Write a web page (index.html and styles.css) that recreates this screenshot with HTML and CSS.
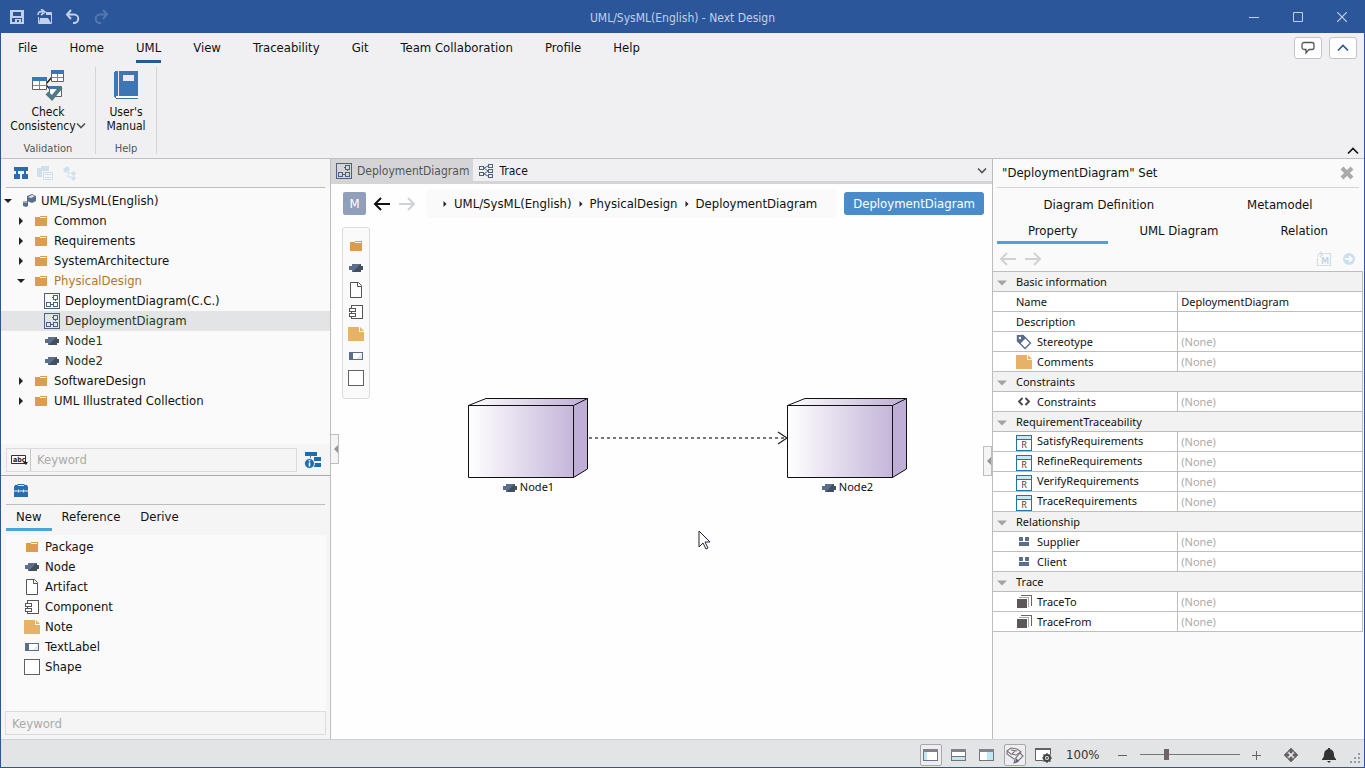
FILE: index.html
```html
<!DOCTYPE html>
<html lang="en">
<head>
    <meta charset="UTF-8">
    <meta name="viewport" content="width=device-width, initial-scale=1.0">
    <title>UML/SysML(English) - Next Design</title>
    <link rel="stylesheet" href="styles.css">
</head>
<body>

    <!-- Shared icons -->
    <svg class="sprite" aria-hidden="true">
        <symbol id="i-folder" viewBox="0 0 16 16" shape-rendering="crispEdges">
            <path d="M2 4h4l1-1h7v10H2z" fill="#dc9c50"/><path d="M7 4h6v1H6z" fill="#fff"/>
        </symbol>
        <symbol id="i-node" viewBox="0 0 16 16" shape-rendering="crispEdges">
            <path d="M1 6h3V4h9v2h2v4h-2v2H4v-2H1z" fill="#5b6f8c"/><path d="M12 4h1v2h2v4h-2v2H4z" fill="#444f5e"/>
        </symbol>
        <symbol id="i-diagram" viewBox="0 0 16 16" shape-rendering="crispEdges">
            <path d="M.5.5h15v15H.5zM9.500 2.500h4v4h-4zM2.500 9.500h4v4h-4zM9.500 9.500h4v4h-4zM8 4.500h1.500M6.500 11.500h3M11.500 6.500v1" fill="none" stroke="#4f6180"/>
        </symbol>
        <symbol id="i-artifact" viewBox="0 0 16 16">
            <path d="M2.500.5h8l3 3v12h-11z M9.500.5v4h4" fill="#fff" stroke="#555"/>
        </symbol>
        <symbol id="i-component" viewBox="0 0 16 16" shape-rendering="crispEdges">
            <path d="M3.500 1.500h11v13h-11z" fill="#fff" stroke="#555"/><path d="M1.500 4.500h6v3h-6zM1.500 9.500h6v3h-6z" fill="#fff" stroke="#555"/>
        </symbol>
        <symbol id="i-note" viewBox="0 0 16 16">
            <path d="M0 1h11v5h5v9H0z" fill="#e7b267"/><path d="M12 1l4 4h-4z" fill="#e7b267"/>
        </symbol>
        <symbol id="i-label" viewBox="0 0 16 16" shape-rendering="crispEdges">
            <path d="M1.500 4.500h13v7h-13z" fill="#fff" stroke="#5b6f8c"/><path d="M1 4h4v8H1z" fill="#5b6f8c"/><path d="M14 5v6H8z" fill="#e4e8ec"/>
        </symbol>
        <symbol id="i-shape" viewBox="0 0 16 16" shape-rendering="crispEdges">
            <path d="M.5.5h15v15H.5z" fill="#fff" stroke="#665f63"/>
        </symbol>
        <symbol id="i-right" viewBox="0 0 8 8"><path d="M2 0l4 4-4 4z" fill="#222"/></symbol>
        <symbol id="i-down" viewBox="0 0 8 8"><path d="M0 2h8L4 6z" fill="currentColor"/></symbol>
        <symbol id="i-back" viewBox="0 0 18 16"><path d="M17 8H2M8 2L2 8l6 6" fill="none" stroke="currentColor" stroke-width="2"/></symbol>
        <symbol id="i-fwd" viewBox="0 0 18 16"><path d="M1 8h15M10 2l6 6-6 6" fill="none" stroke="currentColor" stroke-width="2"/></symbol>
        <symbol id="i-chevup" viewBox="0 0 12 8"><path d="M1 6.500l5-5 5 5" fill="none" stroke="currentColor" stroke-width="1.600"/></symbol>
        <symbol id="i-chevdown" viewBox="0 0 12 8"><path d="M2 1.500l4 4 4-4" fill="none" stroke="currentColor" stroke-width="1.600"/></symbol>
        <symbol id="i-rel" viewBox="0 0 16 16" shape-rendering="crispEdges">
            <path d="M3 3h4v4H3zM9 3h4v4H9zM3 8h10v4H3z" fill="#5b6f8c"/>
        </symbol>
        <symbol id="i-trace" viewBox="0 0 16 16" shape-rendering="crispEdges">
            <path d="M1 5h10v9H1z" fill="#5c585a"/><path d="M3 3.500h9.500V13" fill="none" stroke="#aaa"/><path d="M5 1.500h10.500V12" fill="none" stroke="#666"/>
        </symbol>
        <symbol id="i-tag" viewBox="0 0 16 16">
            <path d="M1.500 2v5l7.500 7.500 5.500-5.500L7 1.500z" fill="#fff" stroke="#5b6f8c" stroke-width="1.400"/><path d="M1 1h6l3 3-6 6-3-3z" fill="#5b6f8c"/><circle cx="4" cy="4" r="1.200" fill="#fff"/>
        </symbol>
        <symbol id="i-code" viewBox="0 0 16 16"><path d="M6.500 4L3 7.500 6.500 11M9.500 4L13 7.500 9.500 11" fill="none" stroke="#444" stroke-width="1.800"/></symbol>
        <symbol id="i-box" viewBox="0 0 120 80">
            <path d="M.5 7L18 .5h101.500V71l-14 8.500H.5z" fill="url(#lilac)"/>
            <path d="M105.500 7l14-6.500V71l-14 8.500z" fill="#bfaed6"/>
            <path d="M.5 7.500L18 .5h101.500V71l-14 8.500H.5zM.5 7.500h105l14-7M105.500 7.500v72" fill="none" stroke="#111"/>
        </symbol>
        <linearGradient id="lilac"><stop offset="0" stop-color="#fff"/><stop offset="1" stop-color="#bdacd5"/></linearGradient>
    </svg>

    <header class="titlebar">
        <div class="quick">
            <button aria-label="Save"><svg width="16" height="16" viewBox="0 0 16 16" shape-rendering="crispEdges"><path d="M1 1h14v14H1zM4 3v4h8V3zM3 9v4h3v-3h6v3h1V9zM8 11v2h2v-2z" fill="currentColor" fill-rule="evenodd"/></svg></button>
            <button aria-label="Open"><svg width="16" height="16" viewBox="0 0 16 16"><path d="M1.500 8v6.500h13v-11H9" fill="none" stroke="currentColor"/><path d="M3 9h8l3 5H2zM9 4h5v2H9z" fill="currentColor"/><path d="M1 6c0-3 2-4 5-3M4 0l4 3-4 3" fill="none" stroke="currentColor" stroke-width="1.600"/></svg></button>
            <button aria-label="Undo"><svg width="16" height="16" viewBox="0 0 16 16"><path d="M6 1L2 5.500 6 10M2 5.500h7a4 4 0 0 1 0 8.500H8" fill="none" stroke="currentColor" stroke-width="2"/></svg></button>
            <button aria-label="Redo" disabled><svg width="16" height="16" viewBox="0 0 16 16"><path d="M10 1l4 4.500L10 10M14 5.500H7A4 4 0 0 0 7 14h1" fill="none" stroke="currentColor" stroke-width="2"/></svg></button>
        </div>
        <span class="title">UML/SysML(English) - Next Design</span>
        <div class="window-buttons">
            <button aria-label="Minimize"><svg width="10" height="10" viewBox="0 0 10 10"><path d="M0 5.500h10" stroke="currentColor"/></svg></button>
            <button aria-label="Maximize"><svg width="10" height="10" viewBox="0 0 10 10"><path d="M.5.5h9v9h-9z" fill="none" stroke="currentColor"/></svg></button>
            <button aria-label="Close"><svg width="10" height="10" viewBox="0 0 10 10"><path d="M0 0l10 10M10 0L0 10" stroke="currentColor" stroke-width="1.200"/></svg></button>
        </div>
    </header>

    <section class="ribbon">
        <nav class="ribbon-tabs">
            <button>File</button>
            <button>Home</button>
            <button class="active">UML</button>
            <button>View</button>
            <button>Traceability</button>
            <button>Git</button>
            <button>Team Collaboration</button>
            <button>Profile</button>
            <button>Help</button>
            <div class="ribbon-actions">
                <button aria-label="Feedback"><svg width="14" height="14" viewBox="0 0 14 14"><path d="M3 1.500h8a2 2 0 0 1 2 2v3a2 2 0 0 1-2 2H8L5 12V8.500H3a2 2 0 0 1-2-2v-3a2 2 0 0 1 2-2z" fill="none" stroke="#555" stroke-width="1.300"/></svg></button>
                <button class="blue" aria-label="Collapse header"><svg width="12" height="8"><use href="#i-chevup"/></svg></button>
            </div>
        </nav>
        <div class="ribbon-body">
            <div class="group group-check">
                <button>
                    <svg width="32" height="32" viewBox="0 0 32 32">
                        <path d="M14 15l6-7M14 16l4 4" stroke="#222" stroke-width="1.500"/>
                        <path d="M.5 8.500h14v12H.5zM19.500 1.500h12v11h-12zM17.500 17.500h12v10h-12z" fill="#fff" stroke="#665f63"/>
                        <path d="M0 8h15v4H0zM19 1h13v4H19zM17 17h10v3H17z" fill="#3c76b5"/>
                        <path d="M7.500 12v8M1 16.500h13M25.500 5v7M20 8.500h11" stroke="#8a8489"/>
                        <path d="M15 24l5 5 9-11" fill="none" stroke="#4d7c80" stroke-width="4"/>
                    </svg>
                    <span>Check<br>Consistency<svg width="10" height="8" viewBox="0 0 10 8"><path d="M1 1.500l4 4 4-4" fill="none" stroke="#555" stroke-width="1.600"/></svg></span>
                </button>
                <span class="caption">Validation</span>
            </div>
            <div class="group group-help">
                <button>
                    <svg width="32" height="32" viewBox="0 0 32 32" shape-rendering="crispEdges">
                        <path d="M5 2h23v25H7v1h21v2H6l-2-2V3z" fill="#3c76b5"/><path d="M6 27h22v2H6z" fill="#fff"/><path d="M8 2h1v25H8zM13 6h11v6H13z" fill="#eee6f4"/>
                    </svg>
                    <span>User's<br>Manual</span>
                </button>
                <span class="caption">Help</span>
            </div>
            <button class="fold" aria-label="Collapse ribbon"><svg width="12" height="8"><use href="#i-chevup"/></svg></button>
        </div>
    </section>

    <main class="workspace">
        <!-- Model navigator and toolbox -->
        <aside class="left">
            <div class="panel-tools">
                <button aria-label="Model"><svg width="14" height="14" viewBox="0 0 14 14" shape-rendering="crispEdges"><path d="M0 1h14v4H0zM2 5h2v4H2zM10 5h2v4h-2zM0 8h6v5H0zM8 8h6v5H8z" fill="#2b6cb0"/></svg></button>
                <button aria-label="Documents"><svg width="16" height="16" viewBox="0 0 16 16" shape-rendering="crispEdges"><path d="M0 3h4V1h8v5H5v6H0z" fill="#cfe0ec"/><path d="M6.500 7.500h9v7h-9zM8 9.500h6M8 12.500h6" fill="none" stroke="#cfe0ec"/></svg></button>
                <button aria-label="Links"><svg width="16" height="16" viewBox="0 0 16 16"><path d="M1 4l5-3 2 4-5 3zM9 8l3-2 2 3-3 2zM9 13l3-2 2 2-3 3z" fill="#cfe0ec"/><path d="M6 5v7h4M6 8h4" fill="none" stroke="#cfe0ec"/></svg></button>
            </div>
            <ul class="tree">
                <li><svg class="twist" width="8" height="8"><use href="#i-down"/></svg><svg width="16" height="16" viewBox="0 0 16 16"><path d="M6 3l5-2 4 2v5l-4 2-5-2z" fill="#5b6f8c"/><path d="M7 4l4-2 3 1-4 2z" fill="#dfe5ee"/><path d="M2 8h5v5l-2 1-3-1z" fill="#5b6f8c"/><path d="M2 9h4" stroke="#dfe5ee"/></svg>UML/SysML(English)</li>
                <li class="lv1"><svg class="twist" width="8" height="8"><use href="#i-right"/></svg><svg width="16" height="16"><use href="#i-folder"/></svg>Common</li>
                <li class="lv1"><svg class="twist" width="8" height="8"><use href="#i-right"/></svg><svg width="16" height="16"><use href="#i-folder"/></svg>Requirements</li>
                <li class="lv1"><svg class="twist" width="8" height="8"><use href="#i-right"/></svg><svg width="16" height="16"><use href="#i-folder"/></svg>SystemArchitecture</li>
                <li class="lv1 parent"><svg class="twist" width="8" height="8"><use href="#i-down"/></svg><svg width="16" height="16"><use href="#i-folder"/></svg>PhysicalDesign</li>
                <li class="lv2"><svg width="16" height="16"><use href="#i-diagram"/></svg>DeploymentDiagram(C.C.)</li>
                <li class="lv2 selected"><svg width="16" height="16"><use href="#i-diagram"/></svg>DeploymentDiagram</li>
                <li class="lv2 touched"><svg width="16" height="16"><use href="#i-node"/></svg>Node1</li>
                <li class="lv2 touched"><svg width="16" height="16"><use href="#i-node"/></svg>Node2</li>
                <li class="lv1"><svg class="twist" width="8" height="8"><use href="#i-right"/></svg><svg width="16" height="16"><use href="#i-folder"/></svg>SoftwareDesign</li>
                <li class="lv1"><svg class="twist" width="8" height="8"><use href="#i-right"/></svg><svg width="16" height="16"><use href="#i-folder"/></svg>UML Illustrated Collection</li>
            </ul>
            <div class="search">
                <div class="search-box">
                    <button aria-label="Search options"><svg width="18" height="14" viewBox="0 0 18 14"><path d="M.5 2.500h14v8H.5z" fill="#fff" stroke="#333"/><text x="2" y="9" font-size="7" font-weight="bold" fill="#222">abc</text><path d="M12 9h5l-2 3z" fill="#222"/></svg></button>
                    <input type="text" placeholder="Keyword" aria-label="Search the model">
                </div>
                <button aria-label="Show hierarchy"><svg width="18" height="18" viewBox="0 0 18 18"><path d="M1 1h12v4H1zM10 6h7v4h-7zM10 12h7v4h-7z" fill="#1b6db3"/><path d="M6.500 4v4" stroke="#777"/><circle cx="5.500" cy="12.500" r="5" fill="#1b6db3" stroke="#f5f5f5"/><path d="M5.500 9v1.500M5.500 11.500v4" stroke="#fff" stroke-width="1.600"/></svg></button>
            </div>

            <div class="toolbox">
                <div class="panel-tools">
                    <button aria-label="Toolbox"><svg width="14" height="14" viewBox="0 0 14 14"><path d="M0 4l1-2h2l1-1h6l1 1h2l1 2v3.500H0zM0 8.500h14V14H0z" fill="#2b6cb0"/><path d="M4 2.500h6M4.500 6.500v3M9.500 6.500v3" fill="none" stroke="#dce8f4"/></svg></button>
                </div>
                <nav class="small-tabs">
                    <button class="active">New</button>
                    <button>Reference</button>
                    <button>Derive</button>
                </nav>
                <ul class="items">
                    <li><svg width="16" height="16"><use href="#i-folder"/></svg>Package</li>
                    <li><svg width="16" height="16"><use href="#i-node"/></svg>Node</li>
                    <li><svg width="16" height="16"><use href="#i-artifact"/></svg>Artifact</li>
                    <li><svg width="16" height="16"><use href="#i-component"/></svg>Component</li>
                    <li><svg width="16" height="16"><use href="#i-note"/></svg>Note</li>
                    <li><svg width="16" height="16"><use href="#i-label"/></svg>TextLabel</li>
                    <li><svg width="16" height="16"><use href="#i-shape"/></svg>Shape</li>
                </ul>
                <input class="filter" type="text" placeholder="Keyword" aria-label="Filter the toolbox">
            </div>
        </aside>

        <!-- Editor -->
        <section class="editor">
            <nav class="doc-tabs">
                <button class="active"><svg width="16" height="16"><use href="#i-diagram"/></svg>DeploymentDiagram</button>
                <button><svg width="16" height="16" viewBox="0 0 16 16" shape-rendering="crispEdges"><path d="M1.500 3.500h4v3h-4zM1.500 9.500h4v3h-4zM10.500 1.500h4v3h-4zM10.500 6.500h4v3h-4zM10.500 11.500h4v3h-4z" fill="none" stroke="#4f6180"/><path d="M6 5l4-2M6 5l4 3M6 11l4-3M6 11l4 2" stroke="#4f6180" shape-rendering="auto"/></svg>Trace</button>
                <button class="more" aria-label="Tab list"><svg width="12" height="8"><use href="#i-chevdown"/></svg></button>
            </nav>
            <div class="address">
                <button class="model">M</button>
                <button aria-label="Back"><svg width="18" height="16"><use href="#i-back"/></svg></button>
                <button aria-label="Forward" disabled><svg width="18" height="16"><use href="#i-fwd"/></svg></button>
                <div class="crumbs">
                    <svg width="6" height="6"><use href="#i-right"/></svg><a href="#">UML/SysML(English)</a>
                    <svg width="6" height="6"><use href="#i-right"/></svg><a href="#">PhysicalDesign</a>
                    <svg width="6" height="6"><use href="#i-right"/></svg><a href="#">DeploymentDiagram</a>
                </div>
                <button class="view-name">DeploymentDiagram</button>
            </div>
            <div class="canvas">
                <div class="palette">
                    <button aria-label="Package"><svg width="16" height="16"><use href="#i-folder"/></svg></button>
                    <button aria-label="Node"><svg width="16" height="16"><use href="#i-node"/></svg></button>
                    <button aria-label="Artifact"><svg width="16" height="16"><use href="#i-artifact"/></svg></button>
                    <button aria-label="Component"><svg width="16" height="16"><use href="#i-component"/></svg></button>
                    <button aria-label="Note"><svg width="16" height="16"><use href="#i-note"/></svg></button>
                    <button aria-label="TextLabel"><svg width="16" height="16"><use href="#i-label"/></svg></button>
                    <button aria-label="Shape"><svg width="16" height="16"><use href="#i-shape"/></svg></button>
                </div>
                <div class="node node1">
                    <svg width="120" height="80"><use href="#i-box"/></svg>
                    <span><svg width="16" height="16"><use href="#i-node"/></svg>Node1</span>
                </div>
                <svg class="link" width="199" height="14" viewBox="0 0 199 14"><path d="M0 7h198" stroke="#777" stroke-width="2" stroke-dasharray="3 3" shape-rendering="crispEdges"/><path d="M189 1l9 6-9 6" fill="none" stroke="#222" stroke-width="1.300"/></svg>
                <div class="node node2">
                    <svg width="120" height="80"><use href="#i-box"/></svg>
                    <span><svg width="16" height="16"><use href="#i-node"/></svg>Node2</span>
                </div>
                <svg class="cursor" width="13" height="20" viewBox="0 0 13 20"><path d="M1 1v16l4-4 3 6 2-1-3-6h5z" fill="#fff" stroke="#223"/></svg>
            </div>
            <button class="handle handle-left" aria-label="Fold left panel"></button>
            <button class="handle handle-right" aria-label="Fold right panel"></button>
        </section>

        <!-- Inspector -->
        <aside class="right">
            <div class="inspector-title">
                <span>"DeploymentDiagram" Set</span>
                <button aria-label="Close"><svg width="14" height="14" viewBox="0 0 14 14"><path d="M2 2l10 10M12 2L2 12" stroke="#aaa" stroke-width="4"/></svg></button>
            </div>
            <nav class="inspector-tabs first">
                <button>Diagram Definition</button>
                <button>Metamodel</button>
            </nav>
            <nav class="inspector-tabs">
                <button class="active">Property</button>
                <button>UML Diagram</button>
                <button>Relation</button>
            </nav>
            <div class="inspector-tools">
                <button aria-label="Back" disabled><svg width="18" height="16"><use href="#i-back"/></svg></button>
                <button aria-label="Forward" disabled><svg width="18" height="16"><use href="#i-fwd"/></svg></button>
                <button class="push" aria-label="Open metamodel" disabled><svg width="16" height="16" viewBox="0 0 16 16"><path d="M1.500 7v7.500h13v-12H8M2 6c0-3 1-4 4-3M4 1l3 2-3 3" fill="none" stroke="#d2dde6" stroke-width="1.200"/><text x="5" y="13" font-size="9" font-weight="bold" fill="#c3d8e8">M</text></svg></button>
                <button aria-label="Go" disabled><svg width="14" height="14" viewBox="0 0 14 14"><circle cx="7" cy="7" r="6" fill="#cbdfed"/><path d="M3 7h7M7 4l3 3-3 3" fill="none" stroke="#fff" stroke-width="1.600"/></svg></button>
            </div>
            <table class="props">
                <tr class="head"><th colspan="2"><svg width="10" height="10"><use href="#i-down"/></svg>Basic information</th></tr>
                <tr><th>Name</th><td class="value">DeploymentDiagram</td></tr>
                <tr><th>Description</th><td></td></tr>
                <tr><th><svg width="16" height="16"><use href="#i-tag"/></svg>Stereotype</th><td>(None)</td></tr>
                <tr><th><svg width="16" height="16"><use href="#i-note"/></svg>Comments</th><td>(None)</td></tr>
                <tr class="head"><th colspan="2"><svg width="10" height="10"><use href="#i-down"/></svg>Constraints</th></tr>
                <tr><th><svg width="16" height="16"><use href="#i-code"/></svg>Constraints</th><td>(None)</td></tr>
                <tr class="head"><th colspan="2"><svg width="10" height="10"><use href="#i-down"/></svg>RequirementTraceability</th></tr>
                <tr><th><i class="req">R</i>SatisfyRequirements</th><td>(None)</td></tr>
                <tr><th><i class="req">R</i>RefineRequirements</th><td>(None)</td></tr>
                <tr><th><i class="req">R</i>VerifyRequirements</th><td>(None)</td></tr>
                <tr><th><i class="req">R</i>TraceRequirements</th><td>(None)</td></tr>
                <tr class="head"><th colspan="2"><svg width="10" height="10"><use href="#i-down"/></svg>Relationship</th></tr>
                <tr><th><svg width="16" height="16"><use href="#i-rel"/></svg>Supplier</th><td>(None)</td></tr>
                <tr><th><svg width="16" height="16"><use href="#i-rel"/></svg>Client</th><td>(None)</td></tr>
                <tr class="head"><th colspan="2"><svg width="10" height="10"><use href="#i-down"/></svg>Trace</th></tr>
                <tr><th><svg width="16" height="16"><use href="#i-trace"/></svg>TraceTo</th><td>(None)</td></tr>
                <tr><th><svg width="16" height="16"><use href="#i-trace"/></svg>TraceFrom</th><td>(None)</td></tr>
            </table>
        </aside>
    </main>

    <footer class="statusbar">
        <button class="on" aria-label="Left panel"><svg width="16" height="16" viewBox="0 0 16 16" shape-rendering="crispEdges"><path d="M.5 2.500h14v11H.5z" fill="#fff" stroke="#77727a"/><path d="M0 2h15v3H0z" fill="#85818c"/><path d="M1 5h3v8H1z" fill="#bfe6f5"/></svg></button>
        <button aria-label="Bottom panel"><svg width="16" height="16" viewBox="0 0 16 16" shape-rendering="crispEdges"><path d="M.5 2.500h14v11H.5z" fill="#fff" stroke="#77727a"/><path d="M0 2h15v3H0z" fill="#85818c"/><path d="M1 10h13v3H1z" fill="#bfe6f5"/><path d="M1 9.500h13" stroke="#77727a"/></svg></button>
        <button aria-label="Right panel"><svg width="16" height="16" viewBox="0 0 16 16" shape-rendering="crispEdges"><path d="M.5 2.500h14v11H.5z" fill="#fff" stroke="#77727a"/><path d="M0 2h15v3H0z" fill="#85818c"/><path d="M8 5h6v8H8z" fill="#bfe6f5"/></svg></button>
        <button class="on" aria-label="Guide"><svg width="18" height="18" viewBox="0 0 18 18"><path d="M1 5l4-3 6 1 4 3-5 3-5-1zM1 5v3l7 5M5 4l6 1M6 8l3-3" fill="#f4f4f6" stroke="#77727a" stroke-width="1.100"/><path d="M14 7l3 3-6 6-3 1 1-4z" fill="#f4f4f6" stroke="#77727a" stroke-width="1.100"/><path d="M10 12l3 3-4 2z" fill="#665f63"/></svg></button>
        <button aria-label="View settings"><svg width="17" height="16" viewBox="0 0 17 16"><path d="M8 13.500H.5v-12h15V7" fill="#fff" stroke="#665f63"/><path d="M0 1h16v2H0z" fill="#665f63"/><circle cx="12" cy="11" r="3" fill="none" stroke="#444" stroke-width="2"/><path d="M12 6v10M7 11h10M8.500 7.500l7 7M15.500 7.500l-7 7" stroke="#444" stroke-width="1.200"/><circle cx="12" cy="11" r="2" fill="#e3e4e6"/><circle cx="12" cy="11" r="1" fill="#444"/></svg></button>
        <span class="zoom-value">100%</span>
        <button class="step" aria-label="Zoom out"><svg width="10" height="10" viewBox="0 0 10 10"><path d="M0 5.500h9" stroke="#665f63"/></svg></button>
        <input type="range" min="0" max="100" value="25" aria-label="Zoom">
        <button class="step" aria-label="Zoom in"><svg width="10" height="10" viewBox="0 0 10 10"><path d="M0 5.500h9M4.500 1v9" stroke="#665f63"/></svg></button>
        <button class="fit" aria-label="Fit"><svg width="16" height="16" viewBox="0 0 16 16"><path d="M8 1l3 3v1L9 4v2H7V4L5 5V4zM8 15l3-3v-1l-2 1v-2H7v2l-2-1v1zM1 8l3-3h1L4 7h2v2H4l1 2H4zM15 8l-3-3h-1l1 2h-2v2h2l-1 2h1z" fill="#665f63" stroke="#665f63" stroke-width=".6"/></svg></button>
        <button class="bell" aria-label="Notifications"><svg width="14" height="16" viewBox="0 0 14 16"><path d="M6 1h2v1c3 1 4 3 4 6 0 2 1 3 2 4v1H0v-1c1-1 2-2 2-4 0-3 1-5 4-6zM5 14h4l-2 2z" fill="#333"/></svg></button>
        <svg class="grip" width="10" height="10" viewBox="0 0 10 10"><path d="M8 0h2v2H8zM4 4h2v2H4zM8 4h2v2H8zM0 8h2v2H0zM4 8h2v2H4zM8 8h2v2H8z" fill="#9a9aae"/></svg>
    </footer>

</body>
</html>
```
FILE: styles.css
```css
* {
    box-sizing: border-box;
}
body {
    margin: 0;
    height: 100vh;
    display: flex;
    flex-direction: column;
    border: 1px solid #2b579a;
    border-top: none;
    background-color: #f0f0f2;
    font-family: "DejaVu Sans Condensed", "DejaVu Sans", sans-serif;
    font-size: 13px;
    line-height: 20px;
    color: #111;
    overflow: hidden;
}
button, input {
    font: inherit;
    color: inherit;
    background: none;
    border: none;
    margin: 0;
    padding: 0;
}
svg {
    display: block;
    flex-shrink: 0;
}
ul {
    list-style: none;
    margin: 0;
    padding: 0;
}
.sprite {
    position: absolute;
    width: 0;
    height: 0;
}

/* Title bar */
.titlebar {
    display: grid;
    grid-template-columns: 1fr auto 1fr;
    align-items: center;
    height: 33px;
    padding: 0 8px;
    background-color: #2b579a;
    color: #c3d0e8;
    font-size: 12px;
}
.titlebar .title {
    padding-top: 2px;
}
.quick {
    display: flex;
    gap: 12px;
}
.quick button {
    display: flex;
    align-items: center;
    height: 16px;
}
.quick button:disabled {
    color: #5377b0;
}
.window-buttons {
    display: flex;
    justify-content: flex-end;
    gap: 34px;
    padding-right: 9px;
}

/* Ribbon */
.ribbon {
    height: 126px;
    border-bottom: 1px solid #c0c0c2;
}
.ribbon-tabs {
    display: flex;
    gap: 32px;
    height: 30px;
    padding: 0 7px 0 17px;
}
.ribbon-tabs > button {
    padding-top: 2px;
    border-bottom: 3px solid transparent;
}
.ribbon-tabs > .active {
    border-color: #2b579a;
}
.ribbon-actions {
    display: flex;
    align-items: center;
    gap: 7px;
    margin-left: auto;
}
.ribbon-actions button {
    display: flex;
    align-items: center;
    justify-content: center;
    width: 28px;
    height: 22px;
    background-color: #fff;
    border: 1px solid #c4c4c8;
    border-radius: 3px;
}
.ribbon-actions .blue {
    color: #2b579a;
}
.ribbon-body {
    display: flex;
    height: 95px;
}
.group {
    display: flex;
    flex-direction: column;
    align-items: center;
    margin: 4px 0;
    padding-top: 2px;
    border-right: 1px solid #d4d4d6;
    font-size: 12px;
    line-height: 14px;
}
.group-check {
    width: 95px;
}
.group-help {
    width: 61px;
}
.group button {
    display: flex;
    flex-direction: column;
    align-items: center;
    gap: 4px;
}
.group span svg {
    display: inline-block;
}
.caption {
    margin-top: auto;
    color: #555;
    font-size: 11px;
    line-height: 10px;
}
.fold {
    align-self: flex-end;
    margin: 0 5px 3px auto;
}

/* Workspace */
.workspace {
    flex: 1;
    display: flex;
    min-height: 0;
}
.left {
    width: 330px;
    display: flex;
    flex-direction: column;
    background-color: #f5f5f5;
    border-right: 1px solid #bdbdbd;
}
.panel-tools {
    display: flex;
    align-items: center;
    gap: 9px;
    height: 29px;
    margin: 0 5px;
    padding-left: 8px;
    border-bottom: 1px solid #bdbdbd;
}
.tree {
    flex: 1;
    padding-top: 3px;
    background-color: #fafafa;
}
.tree li {
    display: flex;
    align-items: center;
    gap: 4px;
    height: 20px;
    padding-left: 3px;
}
.tree .twist {
    margin-right: 5px;
    color: #222;
}
.tree .lv1 {
    padding-left: 16px;
}
.tree .lv1 .twist {
    margin-right: 3px;
}
.tree .lv1 {
    gap: 5px;
}
.tree .lv2 {
    padding-left: 43px;
    gap: 5px;
}
.tree .parent {
    color: #b37726;
}
.tree .selected {
    background-color: #e2e4e6;
    color: #26361c;
}
.tree .touched {
    color: #26361c;
}
.search {
    display: flex;
    align-items: center;
    gap: 7px;
    height: 32px;
    padding: 0 8px 0 5px;
    border-bottom: 1px solid #a9a9a9;
}
.search-box {
    flex: 1;
    display: flex;
    height: 24px;
    border: 1px solid #dcdcdc;
}
.search-box button {
    width: 24px;
    padding-left: 4px;
    border-right: 1px solid #c4c8cc;
}
.search-box input {
    flex: 1;
    padding-left: 6px;
}
input::placeholder {
    color: #aaa;
    opacity: 1;
}
.toolbox {
    display: flex;
    flex-direction: column;
    height: 263px;
}
.small-tabs {
    display: flex;
    height: 26px;
    padding-left: 5px;
}
.small-tabs button {
    padding: 0 10px;
    border-bottom: 3px solid transparent;
}
.small-tabs .active {
    border-color: #4ea3da;
}
.items {
    flex: 1;
    margin: 4px 4px 0 5px;
    padding: 2px 0 0 18px;
    background-color: #fafafa;
}
.items li {
    display: flex;
    align-items: center;
    gap: 5px;
    height: 20px;
}
.filter {
    height: 24px;
    margin: 0 4px 4px;
    padding-left: 6px;
    border: 1px solid #dcdcdc;
}

/* Editor */
.editor {
    position: relative;
    flex: 1;
    display: flex;
    flex-direction: column;
    background-color: #fefefe;
}
.doc-tabs {
    display: flex;
    height: 25px;
    border-bottom: 3px solid #d5d5d7;
    background-color: #f0f0f2;
    font-size: 12px;
}
.doc-tabs button {
    display: flex;
    align-items: center;
    gap: 5px;
    padding: 2px 4px 0 5px;
}
.doc-tabs .active {
    background-color: #d5d5d7;
    color: #555;
}
.doc-tabs .more {
    margin-left: auto;
    color: #555;
}
.address {
    display: flex;
    align-items: center;
    gap: 7px;
    height: 29px;
    margin: 5px 8px 0 12px;
}
.address button:disabled, .inspector-tools button:disabled {
    color: #cfd2d4;
}
.address .model {
    width: 23px;
    height: 23px;
    border-radius: 2px;
    background-color: #919fbb;
    color: #fff;
}
.crumbs {
    flex: 1;
    display: flex;
    align-items: center;
    gap: 6px;
    height: 29px;
    margin-left: 3px;
    padding-left: 16px;
    border-radius: 4px;
    background-color: #fafafa;
}
.crumbs a {
    color: #111;
    text-decoration: none;
}
.address .view-name {
    height: 23px;
    padding: 0 9px;
    border-radius: 3px;
    background-color: #4a8cc9;
    color: #fff;
}
.canvas {
    position: relative;
    flex: 1;
    padding: 9px 11px;
}
.palette {
    display: flex;
    flex-direction: column;
    gap: 6px;
    width: 28px;
    padding: 10px 5px 12px;
    border: 1px solid #dcdcdc;
    border-radius: 3px;
    background-color: #fafafa;
}
/* Diagram elements sit at their canvas coordinates */
.node {
    position: absolute;
    top: 180px;
    width: 120px;
}
.node1 {
    left: 137px;
}
.node2 {
    left: 456px;
}
.node span {
    display: flex;
    justify-content: center;
    gap: 2px;
    font-family: "Noto Sans", sans-serif;
    font-size: 11px;
    line-height: 18px;
}
.node span svg {
    margin-top: 2px;
}
.link {
    position: absolute;
    left: 258px;
    top: 213px;
}
.cursor {
    position: absolute;
    left: 367px;
    top: 312px;
}
.handle {
    position: absolute;
    width: 9px;
    height: 30px;
    background-color: #f5f5f5;
    border: 1px solid #bdbdbd;
}
.handle::after {
    content: "";
    display: block;
    margin-left: 2px;
    border: 4px solid transparent;
    border-left: none;
    border-right: 4px solid #99959d;
}
.handle-left {
    left: -1px;
    top: 275px;
}
.handle-right {
    right: 0;
    top: 287px;
}

/* Inspector */
.right {
    width: 372px;
    background-color: #fafafa;
    border-left: 1px solid #bdbdbd;
    display: flex;
    flex-direction: column;
}
.inspector-title {
    display: flex;
    align-items: center;
    justify-content: space-between;
    height: 29px;
    margin: 0 5px 0 4px;
    padding: 0 5px;
    border-bottom: 1px solid #d4d4d4;
}
.inspector-tabs {
    display: flex;
    height: 26px;
    margin: 0 5px 0 4px;
}
.inspector-tabs.first {
    margin-top: 4px;
}
.inspector-tabs button {
    flex: 1 1 auto;
    padding-top: 2px;
    border-bottom: 3px solid transparent;
}
.inspector-tabs .active {
    border-color: #4ea3da;
}
.inspector-tools {
    display: flex;
    align-items: center;
    gap: 7px;
    height: 27px;
    padding: 2px 8px 0 6px;
}
.inspector-tools .push {
    margin-left: auto;
    margin-right: 3px;
}
.props {
    width: calc(100% - 1px);
    border-collapse: collapse;
    table-layout: fixed;
    background-color: #fff;
    font-family: "Noto Sans", sans-serif;
    font-size: 11px;
    line-height: 18px;
}
.props tr {
    height: 20px;
}
.props th, .props td {
    padding: 0 3px;
    border: 1px solid #bdbdbd;
    border-left: none;
    text-align: left;
    font-weight: normal;
}
.props th {
    padding-left: 23px;
}
.props .head th {
    padding-left: 4px;
    background-color: #f2f2f2;
}
.props svg, .req {
    display: inline-block;
    margin-right: 5px;
    vertical-align: middle;
}
.props svg {
    margin-top: -2px;
}
.props .head svg {
    margin-top: 0;
    margin-right: 9px;
    color: #a5a2a6;
}
.req {
    width: 16px;
    height: 16px;
    border: 1px solid #1b76a5;
    background: linear-gradient(#c9e8f4 3px, #1b76a5 3px, #1b76a5 4px, #fff 4px);
    padding-top: 4px;
    font-size: 9px;
    font-style: normal;
    line-height: 10px;
    text-align: center;
    color: #444;
}
.props td {
    color: #aaa;
}
.props .value {
    color: #111;
}

/* Status bar */
.statusbar {
    display: flex;
    align-items: center;
    justify-content: flex-end;
    height: 28px;
    padding: 2px 4px 0 0;
    border-top: 1px solid #d0d0d2;
    background-color: #e3e4e6;
}
.statusbar button {
    display: flex;
    align-items: center;
    justify-content: center;
    width: 22px;
    height: 22px;
    margin-right: 6px;
}
.statusbar .on {
    border: 1px solid #aaa6ad;
    border-radius: 2px;
    background-color: #eeeef0;
}
.zoom-value {
    width: 46px;
    padding-left: 6px;
    color: #333;
}
.statusbar .step {
    margin: 0 6px;
}
input[type="range"] {
    appearance: none;
    width: 100px;
    height: 12px;
}
input[type="range"]::-webkit-slider-runnable-track {
    height: 1px;
    background-color: #777;
}
input[type="range"]::-webkit-slider-thumb {
    appearance: none;
    width: 5px;
    height: 11px;
    margin-top: -5px;
    background-color: #6e6568;
}
.statusbar .fit {
    margin: 0 16px 0 6px;
}
.statusbar .bell {
    margin-right: 10px;
}
.grip {
    align-self: flex-end;
    margin-bottom: 4px;
}
```
